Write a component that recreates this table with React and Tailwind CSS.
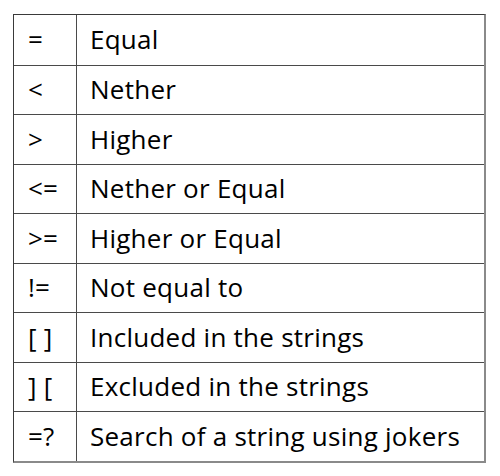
const rows = [
  ["=", "Equal"],
  ["<", "Nether"],
  [">", "Higher"],
  ["<=", "Nether or Equal"],
  [">=", "Higher or Equal"],
  ["!=", "Not equal to"],
  ["[ ]", "Included in the strings"],
  ["] [", "Excluded in the strings"],
  ["=?", "Search of a string using jokers"],
];

const App = () => {
  return (
    <div className="w-[500px] h-[476px] bg-white pt-[14px] pl-[13px]">
      <div className="w-[473px] border-t border-l border-[#3a3a3a] border-r-2 border-b-2 border-r-[#8a8a8a] border-b-[#8a8a8a] font-['Open_Sans',sans-serif] text-[26px] tracking-[0.25px] text-black">
        {rows.map(([op, label], i) => (
          <div key={i} className={`flex h-[49.5px] ${i > 0 ? "border-t border-[#4a4a4a]" : ""}`}>
            <div className="w-[63px] shrink-0 border-r border-[#4a4a4a] flex items-center pl-[14px]">{op}</div>
            <div className="flex-1 flex items-center pl-[13px]">{label}</div>
          </div>
        ))}
      </div>
    </div>
  );
};

export default App;
